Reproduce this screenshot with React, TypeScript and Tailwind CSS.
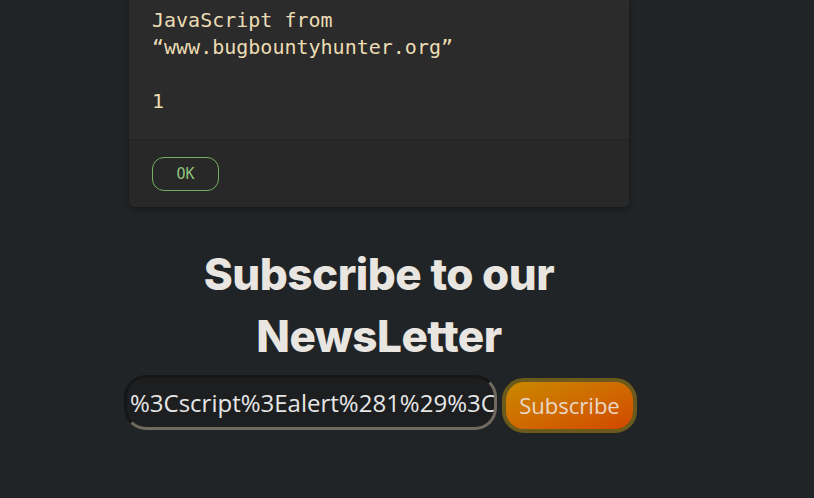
import React from 'react';

const mono = { fontFamily: '"DejaVu Sans Mono", "Liberation Mono", monospace' };

export default function App() {
    return (
        <div className="min-h-[498px] w-full bg-[#212426] overflow-hidden">
            <div className="ml-[129px] w-[500px] flex flex-col items-center">
                {/* alert dialog */}
                <div className="w-full rounded-b-md bg-[#2b2b2b] shadow-[0_2px_6px_rgba(0,0,0,0.35)]" style={mono}>
                    <div className="pl-[23px] pt-[7px] pb-[24px] text-[20px] leading-[27px] text-[#ecdcb4] whitespace-pre">
                        {'JavaScript from\n“www.bugbountyhunter.org”\n\n1'}
                    </div>
                    <div className="border-t border-[#222222] bg-[#282828] rounded-b-md pl-[23px] pt-[17px] pb-[16px]">
                        <button className="w-[67px] h-[34px] rounded-[12px] border border-[#74b064] text-[#90c27c] text-[15px] leading-none">
                            OK
                        </button>
                    </div>
                </div>

                {/* newsletter */}
                <h2
                    className="mt-[36px] w-[440px] text-center text-[44px] leading-[62px] font-extrabold text-[#e9e6e1] tracking-[-0.5px]"
                    style={{ fontFamily: 'Inter, "Open Sans", sans-serif' }}
                >
                    Subscribe to our NewsLetter
                </h2>
                <div className="mt-[8px] ml-[3px] flex items-start gap-[5px]" style={{ fontFamily: '"Open Sans", sans-serif' }}>
                    <div className="w-[373px] h-[55px] rounded-[22px] border-[3px] border-t-[#161616] border-l-[#161616] border-b-[#6f695e] border-r-[#6f695e] bg-[#1c1e20] overflow-hidden flex items-center pl-[3px]">
                        <span className="text-[24px] text-[#e6e6e6] whitespace-nowrap">%3Cscript%3Ealert%281%29%3C</span>
                    </div>
                    <button className="mt-[3px] w-[135px] h-[55px] rounded-[22px] border-4 border-[#6c5a1c] bg-gradient-to-br from-[#c98800] to-[#d24600] text-[22px] text-[#ead8c8]">
                        Subscribe
                    </button>
                </div>
            </div>
        </div>
    );
}
